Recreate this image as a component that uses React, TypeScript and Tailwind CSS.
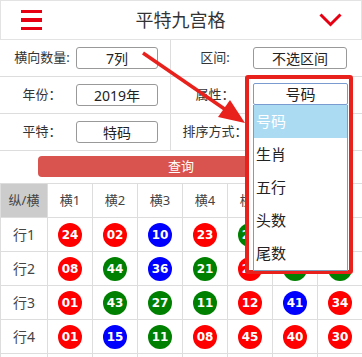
import React from "react";

type Ball = [string, "r" | "g" | "b"];

const ballColor = {
  r: "bg-[#ff0000]",
  g: "bg-[#008000]",
  b: "bg-[#0000ff]",
};

const rows: Ball[][] = [
  [["24", "r"], ["02", "r"], ["10", "b"], ["23", "r"], ["27", "g"], ["05", "g"], ["42", "b"]],
  [["08", "r"], ["44", "g"], ["36", "b"], ["21", "g"], ["24", "r"], ["27", "g"], ["39", "g"]],
  [["01", "r"], ["43", "g"], ["27", "g"], ["11", "g"], ["12", "r"], ["41", "b"], ["34", "r"]],
  [["01", "r"], ["15", "b"], ["11", "g"], ["08", "r"], ["45", "r"], ["40", "r"], ["30", "r"]],
];

const options = ["号码", "生肖", "五行", "头数", "尾数"];

const Field = ({ label, value, right }: { label: string; value?: string; right?: boolean }) => (
  <div className={right ? "flex flex-1 items-center" : "flex w-[171px] items-center border-r border-[#ddd]"}>
    <span className={right ? "ml-[6px] w-[76px] text-center text-[13px]" : "ml-[8px] w-[68px] text-center text-[13px]"}>
      {label}
    </span>
    {value && (
      <div
        className={`flex h-[22px] items-center justify-center rounded-[3px] border border-[#999] text-[14px] text-[#222] ${
          right ? "w-[94px]" : "w-[82px]"
        }`}
      >
        {value}
      </div>
    )}
  </div>
);

export default function App() {
  return (
    <div className="relative w-[362px] bg-white font-['Noto_Sans','Noto_Sans_CJK_SC',sans-serif] text-[#333]">
      {/* header */}
      <div className="flex h-[40px] items-center justify-between border border-[#e3e3e3] pl-[20px] pr-[19px]">
        <div className="flex w-[21px] flex-col gap-[5px]">
          <span className="h-[3.5px] bg-[#e60012]" />
          <span className="h-[3.5px] bg-[#e60012]" />
          <span className="h-[3.5px] bg-[#e60012]" />
        </div>
        <h1 className="text-[18px] text-[#333]">平特九宫格</h1>
        <svg width="23" height="14" viewBox="0 0 23 14">
          <path d="M1.5 1.5 L11.5 11.5 L21.5 1.5" fill="none" stroke="#e60012" strokeWidth="3" />
        </svg>
      </div>

      {/* form */}
      <div className="flex h-[37px] border-b border-[#ddd]">
        <Field label="横向数量:" value="7列" />
        <Field label="区间:" value="不选区间" right />
      </div>
      <div className="flex h-[37px] border-b border-[#ddd]">
        <Field label="年份：" value="2019年" />
        <Field label="属性：" right />
      </div>
      <div className="flex h-[37px] border-b border-[#ddd]">
        <Field label="平特：" value="特码" />
        <Field label="排序方式：" right />
      </div>
      <div className="h-[33px] border-b border-[#ddd] px-[38px] pt-[5px]">
        <div className="flex h-[21px] items-center justify-center rounded-[4px] bg-[#d9534f] text-[13px] text-white">
          查询
        </div>
      </div>

      {/* table */}
      <div className="grid grid-cols-[47px_repeat(7,45px)] border-l border-[#ddd]">
        <div className="flex h-[34px] items-center justify-center border-b border-r border-[#ddd] bg-[#cccccc] text-[13px] text-[#444]">
          纵/横
        </div>
        {[1, 2, 3, 4, 5, 6, 7].map((n) => (
          <div
            key={n}
            className="flex h-[34px] items-center justify-center border-b border-r border-[#ddd] text-[13px] text-[#444]"
          >
            横{n}
          </div>
        ))}
        {rows.map((row, i) => (
          <React.Fragment key={i}>
            <div className="flex h-[34px] items-center justify-center border-b border-r border-[#ddd] text-[14px] text-[#444]">
              行{i + 1}
            </div>
            {row.map(([num, c], j) => (
              <div key={j} className="flex h-[34px] items-center justify-center border-b border-r border-[#ddd]">
                <span
                  className={`flex h-[24px] w-[24px] items-center justify-center rounded-full font-['DejaVu_Sans',sans-serif] text-[12px] font-bold text-white ${ballColor[c]}`}
                >
                  {num}
                </span>
              </div>
            ))}
          </React.Fragment>
        ))}
        {[0, 1, 2, 3, 4, 5, 6, 7].map((k) => (
          <div key={k} className="h-[34px] border-b border-r border-[#ddd]" />
        ))}
      </div>

      {/* open select with annotation box */}
      <div className="absolute left-[245px] top-[75px] h-[199px] w-[108px] rounded-[3px] border-4 border-[#e8211d] bg-white pl-[4px] pt-[4px]">
        <div className="flex h-[22px] w-[95px] items-center justify-center rounded-[2px] border border-[#7a9bd0] text-[15px] text-[#222]">
          号码
        </div>
        <div className="w-[95px] border border-t-0 border-[#7f9db9] bg-white">
          {options.map((o, i) => (
            <div
              key={o}
              className={`flex h-[33px] items-center pl-[2px] text-[15px] ${
                i === 0 ? "bg-[#abdbf3] text-white" : "text-[#222]"
              }`}
            >
              {o}
            </div>
          ))}
        </div>
      </div>

      {/* arrow */}
      <svg className="pointer-events-none absolute left-0 top-0" width="362" height="357">
        <line x1="143" y1="53" x2="226" y2="110" stroke="#e8211d" strokeWidth="3.5" />
        <polygon points="245,123 218,117 230,100" fill="#e8211d" />
      </svg>
    </div>
  );
}
